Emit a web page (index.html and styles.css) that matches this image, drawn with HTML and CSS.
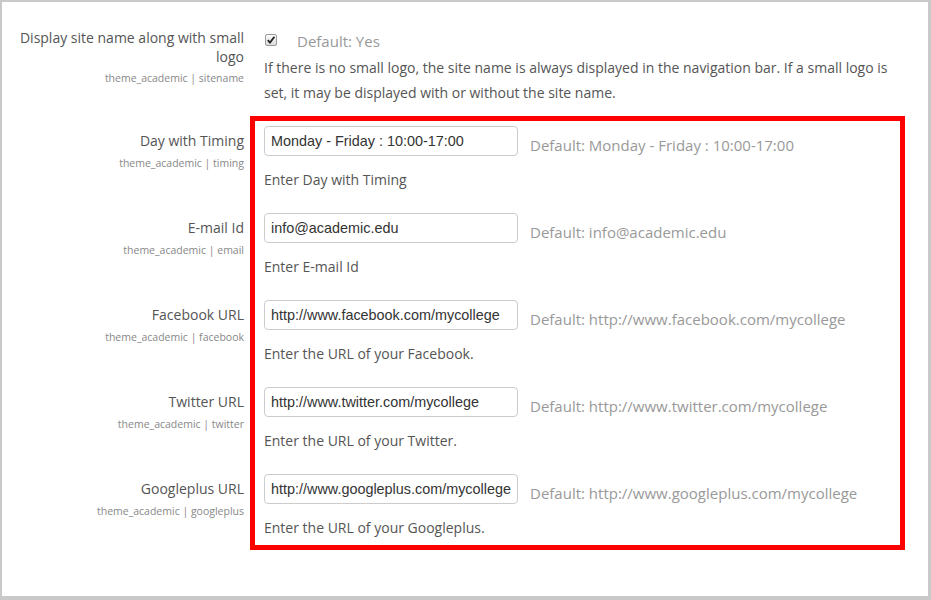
FILE: index.html
```html
<!DOCTYPE html>
<html>
<head>
  <title>Theme settings</title>
  <link rel="stylesheet" href="styles.css">
</head>
<body>
  <div class="frame">
    <div class="settings">
      <div class="setting first">
        <div class="label">
          <div class="title">Display site name along with small logo</div>
          <div class="name">theme_academic | sitename</div>
        </div>
        <div class="content">
          <div class="default-line">
            <span class="checkbox">
              <svg width="10" height="10" viewBox="0 0 10 10"><path d="M1.8 5.2 L4 7.6 L8.4 1.8" fill="none" stroke="#222" stroke-width="1.8"/></svg>
            </span>
            <span class="default">Default: Yes</span>
          </div>
          <div class="desc">If there is no small logo, the site name is always displayed in the navigation bar. If a small logo is set, it may be displayed with or without the site name.</div>
        </div>
      </div>

      <div class="setting">
        <div class="label">
          <div class="title">Day with Timing</div>
          <div class="name">theme_academic | timing</div>
        </div>
        <div class="content">
          <div class="field">
            <input type="text" value="Monday - Friday : 10:00-17:00">
            <span class="default">Default: Monday - Friday : 10:00-17:00</span>
          </div>
          <div class="desc">Enter Day with Timing</div>
        </div>
      </div>

      <div class="setting">
        <div class="label">
          <div class="title">E-mail Id</div>
          <div class="name">theme_academic | email</div>
        </div>
        <div class="content">
          <div class="field">
            <input type="text" value="info@academic.edu">
            <span class="default">Default: info@academic.edu</span>
          </div>
          <div class="desc">Enter E-mail Id</div>
        </div>
      </div>

      <div class="setting">
        <div class="label">
          <div class="title">Facebook URL</div>
          <div class="name">theme_academic | facebook</div>
        </div>
        <div class="content">
          <div class="field">
            <input type="text" value="http://www.facebook.com/mycollege">
            <span class="default">Default: http://www.facebook.com/mycollege</span>
          </div>
          <div class="desc">Enter the URL of your Facebook.</div>
        </div>
      </div>

      <div class="setting">
        <div class="label">
          <div class="title">Twitter URL</div>
          <div class="name">theme_academic | twitter</div>
        </div>
        <div class="content">
          <div class="field">
            <input type="text" value="http://www.twitter.com/mycollege">
            <span class="default">Default: http://www.twitter.com/mycollege</span>
          </div>
          <div class="desc">Enter the URL of your Twitter.</div>
        </div>
      </div>

      <div class="setting">
        <div class="label">
          <div class="title">Googleplus URL</div>
          <div class="name">theme_academic | googleplus</div>
        </div>
        <div class="content">
          <div class="field">
            <input type="text" value="http://www.googleplus.com/mycollege">
            <span class="default">Default: http://www.googleplus.com/mycollege</span>
          </div>
          <div class="desc">Enter the URL of your Googleplus.</div>
        </div>
      </div>
    </div>
    <div class="highlight"></div>
  </div>
</body>
</html>
```

FILE: styles.css
```css
body {
  margin: 0;
  font-family: "Open Sans", sans-serif;
  font-size: 14px;
  color: #555;
  background: #fff;
}
.frame {
  position: relative;
  width: 931px;
  height: 600px;
  box-sizing: border-box;
  border-style: solid;
  border-color: #c9c9c9;
  border-width: 2px 3px 4px 2px;
}
.settings {
  padding-top: 26px;
}
.setting {
  display: flex;
  margin-bottom: 21px;
}
.label {
  width: 242px;
  flex-shrink: 0;
  text-align: right;
  padding-top: 5px;
}
.setting.first .label {
  padding-top: 0;
}
.title {
  line-height: 20px;
  color: #555;
}
.setting.first .title {
  line-height: 19px;
}
.name {
  font-size: 10.5px;
  line-height: 16px;
  margin-top: 4px;
  color: #888;
}
.content {
  margin-left: 20px;
}
.default-line {
  display: flex;
  align-items: center;
  margin-top: 3px;
  line-height: 20px;
}
.checkbox {
  width: 10px;
  height: 10px;
  border: 1px solid #9a9a9a;
  border-radius: 2px;
  background: linear-gradient(#fcfcfc, #dcdcdc);
  display: flex;
  align-items: center;
  justify-content: center;
  margin-left: 1px;
  margin-right: 20px;
  margin-top: -2px;
}
.default {
  color: #999;
  font-size: 15px;
  line-height: 20px;
}
.desc {
  line-height: 25px;
  margin-top: 11px;
  max-width: 640px;
}
.setting.first .desc {
  margin-top: 4px;
}
.field {
  display: flex;
  align-items: flex-start;
}
.field input {
  width: 254px;
  height: 30px;
  box-sizing: border-box;
  border: 1px solid #ccc;
  border-radius: 4px;
  padding: 0 6px;
  font-family: "Liberation Sans", Arial, sans-serif;
  font-size: 14.4px;
  color: #333;
  margin: 0;
}
.field .default {
  margin-left: 12px;
  margin-top: 9px;
}
.highlight {
  position: absolute;
  left: 248px;
  top: 114px;
  width: 655px;
  height: 434px;
  box-sizing: border-box;
  border: 5px solid #ff0000;
}
```
